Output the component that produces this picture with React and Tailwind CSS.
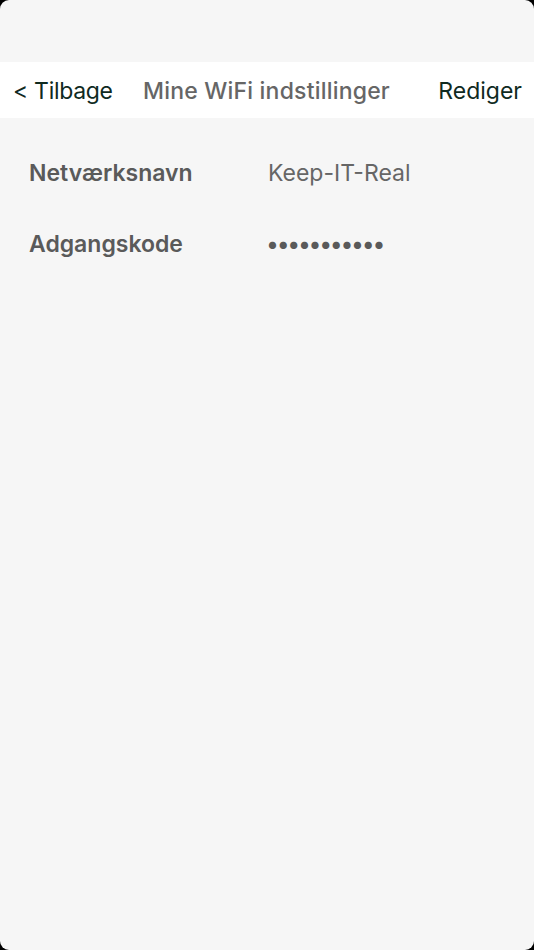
import React from "react";

const rows = [
  { label: "Netværksnavn", value: "Keep-IT-Real" },
  { label: "Adgangskode", value: "•••••••••••", dots: true },
];

export default function App() {
  return (
    <div className="h-[950px] w-[534px] bg-black">
      <div className="flex h-full flex-col rounded-[9px] bg-[#f6f6f6] font-['Inter',sans-serif]">
        <div className="h-[62px]" />
        {/* nav bar */}
        <div className="flex h-[56px] items-center bg-white pt-[3px] pl-[13px] pr-[12px] text-[23px]">
          <span className="w-[130px] text-[#0f2a1f] tracking-[-0.3px]">&lt; Tilbage</span>
          <span className="font-medium text-[#666666] tracking-[0.2px]">Mine WiFi indstillinger</span>
          <span className="flex-1" />
          <span className="text-[#0f2a1f]">Rediger</span>
        </div>
        <div className="flex flex-col gap-[38px] pl-[29px] pt-[39px]">
          {rows.map((r) => (
            <div key={r.label} className="flex h-[33px] items-center text-[23px]">
              <span className="w-[239px] font-semibold text-[#5a5a5a]">{r.label}</span>
              <span
                className={r.dots ? "-ml-[2px] text-[#5a5a5a] tracking-[-2.3px]" : "text-[#666666]"}
              >
                {r.value}
              </span>
            </div>
          ))}
        </div>
      </div>
    </div>
  );
}
